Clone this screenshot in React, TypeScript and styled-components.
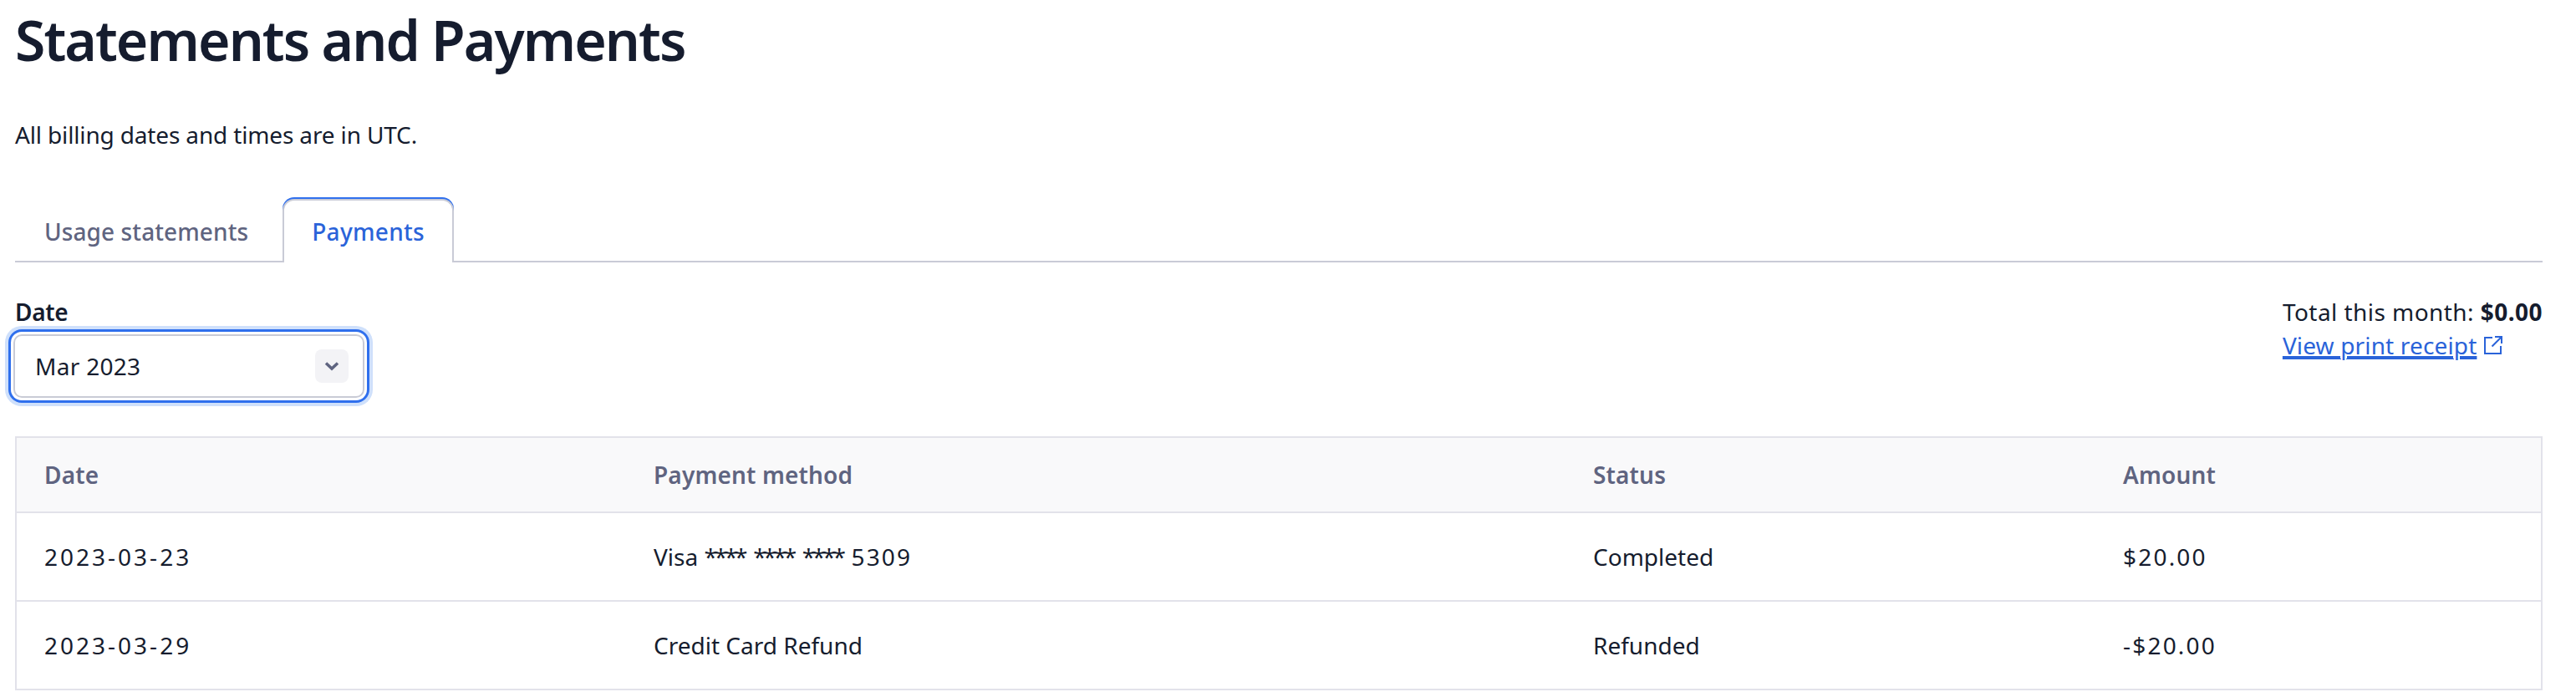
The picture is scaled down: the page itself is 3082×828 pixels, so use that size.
import React from 'react';
import styled, { createGlobalStyle } from 'styled-components';

const GlobalStyle = createGlobalStyle`
  html, body {
    margin: 0;
    padding: 0;
    background: #fff;
    color: #151c2e;
    font-family: "Noto Sans", "Open Sans", sans-serif;
  }
`;

const Page = styled.main`
  box-sizing: border-box;
  width: 3082px;
  height: 828px;
  padding: 0 40px 0 18px;
  overflow: hidden;
`;

const Title = styled.h1`
  margin: 0;
  padding-top: 7px;
  font-size: 66px;
  line-height: 80px;
  font-weight: 600;
  letter-spacing: -1.92px;
  color: #151c2e;
`;

const Note = styled.p`
  margin: 54px 0 0;
  font-size: 28px;
  line-height: 40px;
  letter-spacing: -0.15px;
`;

const TabBar = styled.div`
  display: flex;
  margin-top: 57px;
  height: 74px;
  border-bottom: 2px solid #c9cbd6;
`;

const Tab = styled.div<{ $active?: boolean }>`
  box-sizing: border-box;
  height: 76px;
  padding: 0 33px;
  margin-left: ${({ $active }) => ($active ? '6px' : '0')};
  display: flex;
  align-items: center;
  font-size: 28px;
  font-weight: 500;
  letter-spacing: ${({ $active }) => ($active ? '0.3px' : '0.1px')};
  color: ${({ $active }) => ($active ? '#2a63d9' : '#5f6480')};
  background: ${({ $active }) => ($active ? '#fff' : 'transparent')};
  border-radius: 14px 14px 0 0;
  border: ${({ $active }) => ($active ? '2px solid #c9cbd6' : '2px solid transparent')};
  border-bottom: none;
  box-shadow: ${({ $active }) => ($active ? '0 -2px 0 #2f6fed' : 'none')};
`;

const Filters = styled.div`
  display: flex;
  justify-content: space-between;
  align-items: flex-start;
  margin-top: 39px;
`;

const Field = styled.div`
  display: flex;
  flex-direction: column;
`;

const Label = styled.label`
  font-size: 28px;
  line-height: 40px;
  font-weight: 600;
  letter-spacing: -0.3px;
`;

const Select = styled.div`
  box-sizing: border-box;
  width: 420px;
  height: 76px;
  margin: 7px 0 0 -2px;
  padding: 0 17px 0 24px;
  display: flex;
  align-items: center;
  justify-content: space-between;
  border: 2px solid #c9cbd6;
  border-radius: 10px;
  background: #fff;
  font-size: 28px;
  letter-spacing: 0.3px;
  box-shadow: 0 0 0 3px #fff, 0 0 0 6px #2f6fed, 0 0 0 10px #cfe0fb;
`;

const Chevron = styled.span`
  width: 40px;
  height: 40px;
  border-radius: 8px;
  background: #f3f3f6;
  display: flex;
  align-items: center;
  justify-content: center;
`;

const Summary = styled.div`
  display: flex;
  flex-direction: column;
  font-size: 28px;
  line-height: 40px;
`;

const Total = styled.div`
  text-align: right;
  letter-spacing: 0.45px;

  b {
    font-weight: 700;
  }
`;

const ReceiptLink = styled.a`
  display: flex;
  align-items: center;
  gap: 9px;
  color: #2a63d9;
  letter-spacing: 0.15px;

  span {
    text-decoration: underline;
    text-decoration-thickness: 2px;
    text-underline-offset: 4px;
  }
`;

const PaymentsTable = styled.table`
  width: 100%;
  margin-top: 46px;
  table-layout: fixed;
  border-collapse: collapse;
  font-size: 28px;

  th, td {
    padding: 0 33px;
    text-align: left;
    border: 2px solid #e2e2ea;
    border-left: none;
    border-right: none;
  }

  tr > *:first-child {
    border-left: 2px solid #e2e2ea;
  }

  tr > *:last-child {
    border-right: 2px solid #e2e2ea;
  }

  th {
    height: 88px;
    background: #f9f9fa;
    color: #5f6480;
    font-weight: 600;
    letter-spacing: 0.15px;
  }

  td {
    height: 104px;
  }
`;

const Digits = styled.span<{ $spacing: number }>`
  letter-spacing: ${({ $spacing }) => $spacing}px;
`;

const Stars = styled.span`
  letter-spacing: -3.2px;
  margin-right: 2.5px;
`;

const rows = [
  {
    date: '2023-03-23',
    method: (
      <>
        Visa <Stars>****</Stars> <Stars>****</Stars> <Stars>****</Stars>{' '}
        <Digits $spacing={2.1}>5309</Digits>
      </>
    ),
    status: 'Completed',
    amount: '$20.00',
  },
  { date: '2023-03-29', method: 'Credit Card Refund', status: 'Refunded', amount: '-$20.00' },
];

export default function App() {
  return (
    <Page>
      <GlobalStyle />
      <Title>Statements and Payments</Title>
      <Note>All billing dates and times are in UTC.</Note>
      <TabBar>
        <Tab>Usage statements</Tab>
        <Tab $active>Payments</Tab>
      </TabBar>
      <Filters>
        <Field>
          <Label>Date</Label>
          <Select>
            Mar 2023
            <Chevron>
              <svg width="18" height="12" viewBox="0 0 18 12" fill="none">
                <path d="M2 2.5 9 9l7-6.500" stroke="#5f6480" strokeWidth="3.500" />
              </svg>
            </Chevron>
          </Select>
        </Field>
        <Summary>
          <Total>
            Total this month: <b>$0.00</b>
          </Total>
          <ReceiptLink href="#">
            <span>View print receipt</span>
            <svg width="22" height="22" viewBox="0 0 22 22" fill="none" stroke="#2a63d9" strokeWidth="2">
              <path d="M10 2H1v19h19v-9" />
              <path d="M13 1h8v8M21 1 9.500 12.500" />
            </svg>
          </ReceiptLink>
        </Summary>
      </Filters>
      <PaymentsTable>
        <colgroup>
          <col width="730" />
          <col width="1124" />
          <col width="634" />
          <col />
        </colgroup>
        <thead>
          <tr>
            <th>Date</th>
            <th>Payment method</th>
            <th>Status</th>
            <th>Amount</th>
          </tr>
        </thead>
        <tbody>
          {rows.map((row) => (
            <tr key={row.date}>
              <td>
                <Digits $spacing={3}>{row.date}</Digits>
              </td>
              <td>{row.method}</td>
              <td>{row.status}</td>
              <td>
                <Digits $spacing={2.2}>{row.amount}</Digits>
              </td>
            </tr>
          ))}
        </tbody>
      </PaymentsTable>
    </Page>
  );
}
